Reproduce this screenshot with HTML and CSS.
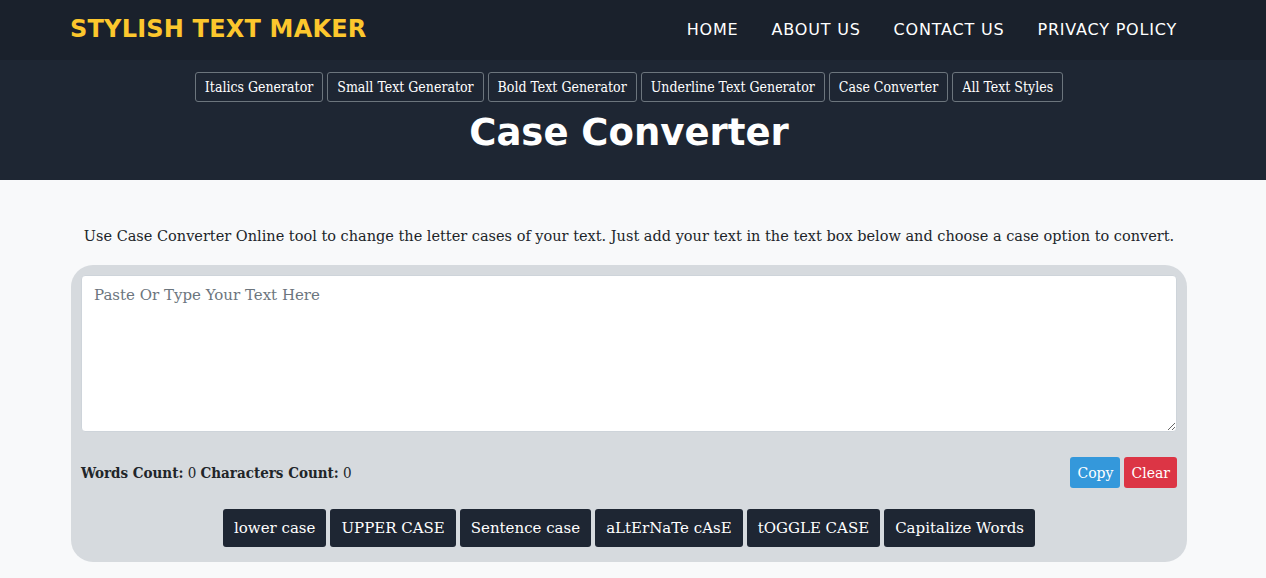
FILE: index.html
```html
<!DOCTYPE html>
<html>

<head>
    <link rel="stylesheet" href="styles.css">
</head>

<body>
    <header class="navbar">
        <div class="container nav-inner">
            <a class="brand" href="#">STYLISH TEXT MAKER</a>
            <nav class="nav-links">
                <a href="#">HOME</a>
                <a href="#">ABOUT US</a>
                <a href="#">CONTACT US</a>
                <a href="#">PRIVACY POLICY</a>
            </nav>
        </div>
    </header>

    <section class="hero">
        <div class="container">
            <div class="tool-links">
                <a class="tool-link" href="#">Italics Generator</a>
                <a class="tool-link" href="#">Small Text Generator</a>
                <a class="tool-link" href="#">Bold Text Generator</a>
                <a class="tool-link" href="#">Underline Text Generator</a>
                <a class="tool-link" href="#">Case Converter</a>
                <a class="tool-link" href="#">All Text Styles</a>
            </div>
            <h1 class="title">Case Converter</h1>
        </div>
    </section>

    <main class="container">
        <p class="intro">
            Use Case Converter Online tool to change the letter cases of your text. Just add your text in the text box below and choose a case option to convert.
        </p>

        <div class="tool-box">
            <textarea class="js-input" placeholder="Paste Or Type Your Text Here"></textarea>

            <div class="count-row">
                <p class="counts">
                    <b>Words Count:</b> <span class="js-words">0</span>
                    <b>Characters Count:</b> <span class="js-chars">0</span>
                </p>
                <div class="actions">
                    <button class="copy-button">Copy</button>
                    <button class="clear-button">Clear</button>
                </div>
            </div>

            <div class="case-buttons">
                <button class="case-button">lower case</button>
                <button class="case-button">UPPER CASE</button>
                <button class="case-button">Sentence case</button>
                <button class="case-button">aLtErNaTe cAsE</button>
                <button class="case-button">tOGGLE CASE</button>
                <button class="case-button">Capitalize Words</button>
            </div>
        </div>
    </main>
</body>

</html>
```

FILE: styles.css
```css
body {
    margin: 0;
    background-color: #f8f9fa;
    color: #212529;
    font-family: "DejaVu Serif", serif;
}

.container {
    max-width: 1124px;
    margin: 0 auto;
    padding-right: 8px;
    box-sizing: border-box;
}

.navbar {
    background-color: #1a212c;
    height: 60px;
}

.nav-inner {
    display: flex;
    justify-content: space-between;
    align-items: center;
    height: 60px;
}

.brand {
    font-family: "DejaVu Sans", sans-serif;
    font-size: 24px;
    font-weight: bold;
    color: #fcc72d;
    text-decoration: none;
    letter-spacing: 0.2px;
    margin-left: -1px;
    margin-top: -2px;
}

.nav-links {
    display: flex;
    gap: 33px;
    padding-right: 10px;
    margin-top: -2px;
}

.nav-links a {
    font-family: "DejaVu Sans", sans-serif;
    font-size: 16px;
    color: white;
    text-decoration: none;
    letter-spacing: 0.8px;
}

.hero {
    background-color: #1e2633;
    height: 120px;
    padding-top: 12px;
    box-sizing: border-box;
}

.tool-links {
    display: flex;
    justify-content: center;
    gap: 4px;
}

.tool-link {
    font-family: "DejaVu Serif Condensed", serif;
    font-size: 14px;
    color: white;
    text-decoration: none;
    border: 1px solid #6c757d;
    border-radius: 3px;
    height: 30px;
    line-height: 28px;
    padding: 0 9px;
    box-sizing: border-box;
}

.title {
    font-family: "DejaVu Sans", sans-serif;
    font-size: 37px;
    font-weight: bold;
    color: white;
    text-align: center;
    margin: 9px 0 0 0;
}

.intro {
    font-size: 14.5px;
    text-align: center;
    margin: 46px 0 19px 0;
    line-height: 20px;
}

.tool-box {
    background-color: #d6dade;
    border-radius: 22px;
    padding: 10px 10px 15px 10px;
}

.tool-box textarea {
    display: block;
    width: 100%;
    height: 157px;
    box-sizing: border-box;
    border: 1px solid #ced4da;
    border-radius: 4px;
    padding: 10px 12px;
    font-family: "DejaVu Serif", serif;
    font-size: 15px;
    color: #212529;
    background-color: white;
}

.tool-box textarea::placeholder {
    color: #6c757d;
}

.count-row {
    display: flex;
    justify-content: space-between;
    align-items: center;
    margin-top: 25px;
}

.counts {
    margin: 0;
    font-family: "DejaVu Serif Condensed", serif;
    font-size: 15px;
}

.actions {
    display: flex;
    gap: 4px;
}

.copy-button,
.clear-button {
    font-family: "DejaVu Serif", serif;
    font-size: 14px;
    color: white;
    border: none;
    border-radius: 3px;
    height: 31px;
    padding: 0 7px;
}

.copy-button {
    background-color: #3498db;
}

.clear-button {
    background-color: #dc3545;
}

.case-buttons {
    display: flex;
    justify-content: center;
    gap: 4px;
    margin-top: 21px;
}

.case-button {
    font-family: "DejaVu Serif", serif;
    font-size: 15px;
    color: white;
    background-color: #1e2633;
    border: none;
    border-radius: 3px;
    height: 38px;
    padding: 0 11px;
}
```
